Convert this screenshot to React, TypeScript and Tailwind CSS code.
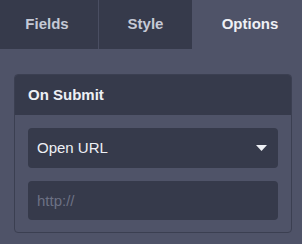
import { useState } from "react";

const tabs = ["Fields", "Style", "Options"];

const App = () => {
  const [active, setActive] = useState("Options");
  const [action, setAction] = useState("Open URL");

  return (
    <div
      className="w-[302px] h-[244px] bg-[#4f5368] overflow-hidden"
      style={{ fontFamily: '"Liberation Sans", Arial, sans-serif' }}
    >
      <div className="flex h-[49px]">
        {tabs.map((tab, i) => (
          <button
            key={tab}
            onClick={() => setActive(tab)}
            className={`flex items-center justify-center text-[15px] font-bold ${
              i === 0
                ? "w-[98px] pr-[4px]"
                : i === 1
                ? "w-[94px] border-l border-[#4a4e62]"
                : "flex-1 pl-[6px]"
            } ${
              active === tab
                ? "bg-[#4f5368] text-[#eef0f5]"
                : "bg-[#363a4b] text-[#c5c9d6]"
            }`}
          >
            {tab}
          </button>
        ))}
      </div>

      <div className="ml-[14px] mt-[25px] w-[278px] rounded-[4px] border border-[#3b3f51] overflow-hidden">
        <div className="h-[40px] bg-[#363a4b] flex items-center px-[13px] text-[15px] font-bold text-[#eef0f5]">
          On Submit
        </div>
        <div className="px-[13px] pt-[13px] pb-[12px] flex flex-col gap-[13px]">
          <div className="relative h-[40px] rounded-[4px] bg-[#363a4b] flex items-center pl-[9px] pr-[10px]">
            <span className="text-[15px] text-[#eef0f5] flex-1">{action}</span>
            <svg width="11" height="6" viewBox="0 0 11 6" className="mr-[1px]">
              <path d="M0 0 H11 L5.5 6 Z" fill="#eef0f5" />
            </svg>
            <select
              value={action}
              onChange={(e) => setAction(e.target.value)}
              className="absolute inset-0 opacity-0 cursor-pointer"
            >
              <option>Open URL</option>
              <option>Show message</option>
            </select>
          </div>
          <input
            placeholder="http://"
            className="h-[39px] rounded-[4px] bg-[#363a4b] px-[9px] text-[15px] text-[#eef0f5] placeholder:text-[#6c7184] outline-none"
          />
        </div>
      </div>
    </div>
  );
};

export default App;
